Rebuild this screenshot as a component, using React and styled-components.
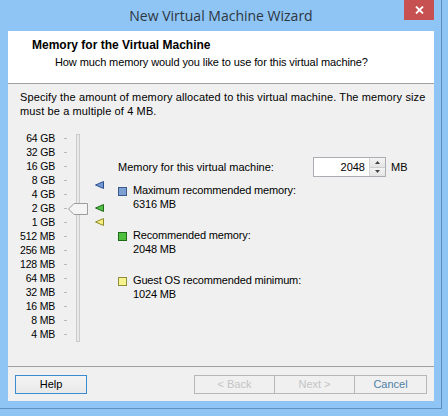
import React from 'react';
import styled, { createGlobalStyle } from 'styled-components';

const GlobalStyle = createGlobalStyle`
  html, body { margin: 0; padding: 0; }
  body {
    width: 448px;
    height: 416px;
    overflow: hidden;
    background: #8ec4f4;
    font-family: "Liberation Sans", Arial, sans-serif;
  }
`;

const UI_FONT = `"Liberation Sans", Arial, sans-serif`;

const Desktop = styled.div`
  width: 448px;
  height: 416px;
  background: #8ec4f4;
`;

const Window = styled.div`
  box-sizing: border-box;
  width: 442px;
  height: 409px;
  background: #8fc5f5;
  border-right: 1px solid #5f8fc2;
  border-bottom: 1px solid #5f8fc2;
  padding: 0 7px 0 8px;
  display: flex;
  flex-direction: column;
`;

const TitleBar = styled.div`
  height: 31px;
  display: grid;
  grid-template-columns: 30px 1fr 30px;
  align-items: center;
`;

const Title = styled.div`
  grid-column: 2;
  text-align: center;
  font-family: "Open Sans", "Noto Sans", sans-serif;
  font-size: 14px;
  color: #2c3641;
  line-height: 20px;
  padding-top: 1px;
`;

const CloseButton = styled.div`
  grid-column: 3;
  align-self: start;
  width: 30px;
  height: 20px;
  background: #c75050;
  display: flex;
  align-items: center;
  justify-content: center;
`;

const Client = styled.div`
  height: 370px;
  background: #f0f0f0;
  display: flex;
  flex-direction: column;
  font-family: ${UI_FONT};
  font-size: 11px;
  color: #000;
`;

const Header = styled.div`
  box-sizing: border-box;
  height: 53px;
  background: #fff;
  border-bottom: 1px solid #a0a0a0;
  padding: 7px 0 0 24px;
`;

const HeaderTitle = styled.div`
  font-weight: bold;
  font-size: 12px;
  line-height: 14px;
`;

const HeaderSubtitle = styled.div`
  line-height: 14px;
  margin: 3px 0 0 23px;
  letter-spacing: -0.1px;
`;

const Body = styled.div`
  flex: 1;
  padding: 6px 0 0 12px;
`;

const Description = styled.p`
  margin: 0;
  line-height: 14px;
  white-space: nowrap;
  letter-spacing: 0.12px;
`;

const Main = styled.div`
  display: flex;
  margin-top: 13px;
`;

const SliderArea = styled.div`
  position: relative;
  width: 98px;
  display: flex;
  flex-shrink: 0;
`;

const ScaleList = styled.div`
  display: flex;
  flex-direction: column;
`;

const ScaleRow = styled.div`
  height: 14px;
  display: flex;
  align-items: center;
`;

const ScaleLabel = styled.span`
  width: 35px;
  text-align: right;
  font-size: 10.5px;
  letter-spacing: -0.2px;
  line-height: 14px;
  white-space: nowrap;
`;

const Tick = styled.span`
  width: 3px;
  height: 1px;
  background: #b9b9b9;
  margin-left: 9px;
`;

const Track = styled.div`
  box-sizing: border-box;
  width: 4px;
  height: 208px;
  margin: 3px 0 0 9px;
  background: #e9e9e9;
  border: 1px solid #cbcbcb;
`;

const Overlay = styled.div`
  position: absolute;
  left: ${p => p.$left}px;
  line-height: 0;
`;

const Panel = styled.div`
  display: flex;
  flex-direction: column;
`;

const MemoryRow = styled.div`
  display: flex;
  align-items: center;
  height: 20px;
  margin-top: 26px;
`;

const MemoryLabel = styled.span`
  width: 195px;
  line-height: 14px;
`;

const SpinBox = styled.div`
  display: flex;
  height: 20px;
  box-sizing: border-box;
  border: 1px solid #abadb3;
  background: #fff;
`;

const SpinValue = styled.div`
  width: 51px;
  padding-right: 4px;
  text-align: right;
  line-height: 18px;
`;

const SpinButtons = styled.div`
  display: flex;
  flex-direction: column;
  width: 15px;
  border-left: 1px solid #d4d4d4;
`;

const SpinButton = styled.div`
  flex: 1;
  display: flex;
  align-items: center;
  justify-content: center;
  background: linear-gradient(#f4f4f4, #e4e4e4);
  border-bottom: ${p => (p.$top ? '1px solid #cfcfcf' : 'none')};
`;

const Unit = styled.span`
  margin-left: 5px;
  line-height: 14px;
`;

const Legend = styled.div`
  display: flex;
  flex-direction: column;
  gap: 17px;
  margin-top: 6px;
  letter-spacing: -0.15px;
`;

const LegendItem = styled.div`
  display: grid;
  grid-template-columns: 15px auto;
  line-height: 14px;
`;

const Swatch = styled.span`
  box-sizing: border-box;
  width: 9px;
  height: 9px;
  margin-top: 4px;
  background: ${p => p.$fill};
  border: 1px solid ${p => p.$edge};
`;

const LegendValue = styled.span`
  grid-column: 2;
`;

const Footer = styled.div`
  box-sizing: border-box;
  height: 35px;
  border-top: 1px solid #a0a0a0;
  display: flex;
  align-items: flex-start;
  justify-content: space-between;
  padding: 8px 7px 0 7px;
`;

const HelpButton = styled.div`
  box-sizing: border-box;
  width: 72px;
  height: 19px;
  border: 1px solid #3c8ad4;
  background: linear-gradient(#f4f4f4, #e9e9e9);
  text-align: center;
  line-height: 17px;
`;

const NavGroup = styled.div`
  display: flex;
`;

const NavButton = styled.div`
  box-sizing: border-box;
  width: ${p => p.$w}px;
  height: 19px;
  border: 1px solid #b8b8b8;
  margin-left: -1px;
  background: #f0f0f0;
  text-align: center;
  line-height: 17px;
  color: ${p => p.$ink};
`;

const scale = [
  '64 GB', '32 GB', '16 GB', '8 GB', '4 GB', '2 GB', '1 GB',
  '512 MB', '256 MB', '128 MB', '64 MB', '32 MB', '16 MB', '8 MB', '4 MB',
];

// vertical centre (px) of a memory size on the log2 scale, 14px per step from 64 GB
const rowCenter = mb => 7 + 14 * Math.log2(65536 / mb);

const markers = [
  { mb: 6316, fill: '#7398d6', edge: '#2c4f8c' },
  { mb: 2048, fill: '#52c046', edge: '#1f6b1a' },
  { mb: 1024, fill: '#f6f07a', edge: '#8c8a2c' },
];

const legend = [
  { label: 'Maximum recommended memory:', value: '6316 MB', fill: '#7d9fd3', edge: '#3a5a8c' },
  { label: 'Recommended memory:', value: '2048 MB', fill: '#4fbf3f', edge: '#1e6a18' },
  { label: 'Guest OS recommended minimum:', value: '1024 MB', fill: '#f7f38f', edge: '#8f8c3a' },
];

const Marker = ({ fill, edge }) => (
  <svg width="9" height="8" viewBox="0 0 9 8">
    <polygon points="0.5,4 8.5,0.5 8.5,7.5" fill={fill} stroke={edge} strokeWidth="1" />
  </svg>
);

const Thumb = () => (
  <svg width="20" height="12" viewBox="0 0 20 12">
    <polygon points="0.5,6 6,0.5 19.5,0.5 19.5,11.5 6,11.5" fill="#f4f4f4" stroke="#9c9c9c" strokeWidth="1" />
  </svg>
);

const Arrow = ({ up }) => (
  <svg width="5" height="3" viewBox="0 0 5 3">
    <polygon points={up ? '0,3 2.5,0 5,3' : '0,0 5,0 2.5,3'} fill="#444" />
  </svg>
);

export default function App() {
  const memory = 2048;
  return (
    <Desktop>
      <GlobalStyle />
      <Window>
        <TitleBar>
          <Title>New Virtual Machine Wizard</Title>
          <CloseButton>
            <svg width="9" height="8" viewBox="0 0 9 8">
              <path d="M1 0.5 L8 7.5 M8 0.5 L1 7.5" stroke="#fff" strokeWidth="1.8" />
            </svg>
          </CloseButton>
        </TitleBar>
        <Client>
          <Header>
            <HeaderTitle>Memory for the Virtual Machine</HeaderTitle>
            <HeaderSubtitle>How much memory would you like to use for this virtual machine?</HeaderSubtitle>
          </Header>
          <Body>
            <Description>
              Specify the amount of memory allocated to this virtual machine. The memory size
              <br />
              must be a multiple of 4 MB.
            </Description>
            <Main>
              <SliderArea>
                <ScaleList>
                  {scale.map(s => (
                    <ScaleRow key={s}>
                      <ScaleLabel>{s}</ScaleLabel>
                      <Tick />
                    </ScaleRow>
                  ))}
                </ScaleList>
                <Track />
                <Overlay $left={48} style={{ top: Math.round(rowCenter(memory)) - 5 }}>
                  <Thumb />
                </Overlay>
                {markers.map(m => (
                  <Overlay key={m.mb} $left={75} style={{ top: Math.round(rowCenter(m.mb)) - 4 }}>
                    <Marker fill={m.fill} edge={m.edge} />
                  </Overlay>
                ))}
              </SliderArea>
              <Panel>
                <MemoryRow>
                  <MemoryLabel>Memory for this virtual machine:</MemoryLabel>
                  <SpinBox>
                    <SpinValue>{memory}</SpinValue>
                    <SpinButtons>
                      <SpinButton $top><Arrow up /></SpinButton>
                      <SpinButton><Arrow /></SpinButton>
                    </SpinButtons>
                  </SpinBox>
                  <Unit>MB</Unit>
                </MemoryRow>
                <Legend>
                  {legend.map(l => (
                    <LegendItem key={l.label}>
                      <Swatch $fill={l.fill} $edge={l.edge} />
                      <span>{l.label}</span>
                      <LegendValue>{l.value}</LegendValue>
                    </LegendItem>
                  ))}
                </Legend>
              </Panel>
            </Main>
          </Body>
          <Footer>
            <HelpButton>Help</HelpButton>
            <NavGroup>
              <NavButton $w={81} $ink="#c4c4c4">&lt; Back</NavButton>
              <NavButton $w={81} $ink="#c4c4c4">Next &gt;</NavButton>
              <NavButton $w={73} $ink="#4d7fa8">Cancel</NavButton>
            </NavGroup>
          </Footer>
        </Client>
      </Window>
    </Desktop>
  );
}
